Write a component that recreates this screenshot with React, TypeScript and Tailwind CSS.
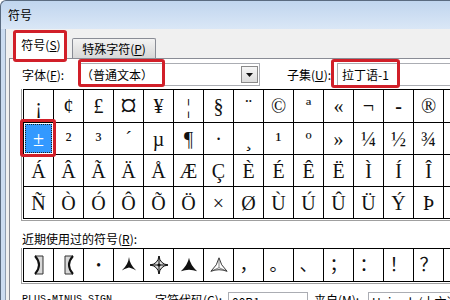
import React from "react";

const rows = [
  "¡¢£¤¥¦§¨©ª«¬\u00AD®",
  "±²³´µ¶·¸¹º»¼½¾",
  "ÁÂÃÄÅÆÇÈÉÊËÌÍÎ",
  "ÑÒÓÔÕÖ×ØÙÚÛÜÝÞ",
];

function Star3({ filled }: { filled?: boolean }) {
  return (
    <svg width="18" height="18" viewBox="0 0 20 20">
      {filled ? (
        <path d="M10 2 Q11.5 10 19 17 Q10 13.5 1 17 Q8.5 10 10 2 Z" fill="#111" />
      ) : (
        <path d="M10 1 Q10.8 9.5 18 16 Q11 12.8 10 12.8 Q9 12.8 2 16 Q9.2 9.5 10 1 Z" fill="#111" />
      )}
    </svg>
  );
}

function Star3Outline() {
  return (
    <svg width="18" height="18" viewBox="0 0 20 20">
      <path d="M10 2 Q11.5 10 19 17 Q10 13.5 1 17 Q8.5 10 10 2 Z" fill="#fff" stroke="#222" strokeWidth="1" />
      <path d="M10 3 V13 M10 13 L2 16.5 M10 13 L18 16.5" stroke="#555" strokeWidth="0.8" fill="none" />
    </svg>
  );
}

function Star4() {
  return (
    <svg width="20" height="20" viewBox="0 0 20 20">
      <path d="M10 1 Q11 9 19 10 Q11 11 10 19 Q9 11 1 10 Q9 9 10 1 Z" fill="#ddd" stroke="#111" strokeWidth="1" />
      <path d="M10 1 V19 M1 10 H19" stroke="#111" strokeWidth="1" />
      <circle cx="10" cy="10" r="1.6" fill="#111" />
    </svg>
  );
}

function BracketR() {
  return (
    <svg width="12" height="22" viewBox="0 0 12 22">
      <path d="M2 2 Q10 11 2 20 H10 V2 Z" fill="#d8d8d8" />
      <path d="M2 2 H10 V20 H2" stroke="#333" strokeWidth="1" fill="none" />
      <path d="M2 2 Q10 11 2 20" stroke="#111" strokeWidth="2" fill="none" />
    </svg>
  );
}

function BracketL() {
  return (
    <svg width="12" height="22" viewBox="0 0 12 22">
      <path d="M10 2 Q2 11 10 20 H2 V2 Z" fill="#d8d8d8" />
      <path d="M10 2 H2 V20 H10" stroke="#333" strokeWidth="1" fill="none" />
      <path d="M10 2 Q2 11 10 20" stroke="#111" strokeWidth="2" fill="none" />
    </svg>
  );
}

const recent: React.ReactNode[] = [
  <BracketR />,
  <BracketL />,
  <span className="text-[12px] font-bold">•</span>,
  <Star3 />,
  <Star4 />,
  <Star3 filled />,
  <Star3Outline />,
  "，",
  "。",
  "、",
  "；",
  "：",
  "！",
  "？",
];

function RedBox({ cls }: { cls: string }) {
  return <div className={`absolute z-20 rounded-[3px] border-[3px] border-[#d11f29] ${cls}`} />;
}

function renderGlyph(ch: string) {
  if (ch === "\u00AD") return <span className="font-bold">-</span>;
  if (ch === "¤") return <span className="text-[34px]">¤</span>;
  return ch;
}

export default function App() {
  return (
    <div className="relative h-[300px] w-[450px] overflow-hidden bg-white text-[12px] text-black font-['Noto_Sans_CJK_SC','Liberation_Sans',sans-serif]">
      {/* Title bar */}
      <div className="h-[29px] rounded-tl-[6px] border-l border-t border-[#5a6b80] bg-gradient-to-b from-[#c0d5ee] to-[#dae7f6] pl-[7px] pt-[7px] leading-[14px]">
        符号
      </div>
      <div className="flex h-[271px]">
        <div className="w-[6px] shrink-0 border-l border-r border-l-[#5a6b80] border-r-[#8e9db0] bg-[#cbdcf1]" />
        <div className="flex min-w-0 flex-1 flex-col bg-[#f0f0f0]">
          {/* Tabs */}
          <div className="flex h-[29px] shrink-0 items-start pt-[2px]">
            <div className="relative z-10 ml-[9px] flex h-[28px] w-[52px] items-center justify-center rounded-t-[2px] border border-b-0 border-[#898c95] bg-white pb-[2px]">
              符号(<u>S</u>)
            </div>
            <div className="ml-[5px] mt-[7px] flex h-[20px] w-[84px] items-center justify-center rounded-t-[2px] border border-b-0 border-[#898c95] bg-gradient-to-b from-[#f3f3f3] to-[#d7d7d7]">
              特殊字符(<u>P</u>)
            </div>
          </div>
          {/* Panel */}
          <div className="ml-[3px] flex flex-1 flex-col border-l border-t border-[#898c95] bg-white pl-[12px] pt-[4px]">
            <div className="flex h-[23px] shrink-0 items-center">
              <div className="w-[57px] shrink-0">
                字体(<u>F</u>):
              </div>
              <div className="flex h-[23px] w-[181px] shrink-0 items-center border border-[#abadb3] bg-white pl-px">
                <span>（普通文本）</span>
                <div className="ml-auto mr-px flex h-[17px] w-[17px] items-center justify-center border border-[#8a8a8a] bg-gradient-to-b from-[#f6f6f6] to-[#dcdcdc]">
                  <svg width="7" height="4" viewBox="0 0 7 4">
                    <path d="M0 0 H7 L3.5 4 Z" fill="#111" />
                  </svg>
                </div>
              </div>
              <div className="ml-[27px] w-[50px] shrink-0">
                子集(<u>U</u>):
              </div>
              <div className="flex h-[23px] w-[130px] shrink-0 items-center border border-[#abadb3] bg-white pl-[4px]">
                拉丁语-1
              </div>
            </div>

            {/* Character grid */}
            <div className="-ml-px mt-[3px] shrink-0 self-start border-b border-l border-[#a0a0a0] pb-px pl-px">
              <div className="grid w-max grid-cols-[repeat(15,29px)] grid-rows-[32px_31px_31px_31px] gap-px bg-black p-px font-['Liberation_Serif',serif] text-[20px] leading-none text-[#111]">
                {rows.map((r, ri) => [
                  ...Array.from(r).map((ch, ci) => {
                    if (ri === 1 && ci === 0) {
                      return (
                        <div key={`${ri}-${ci}`} className="flex bg-white p-px">
                          <div className="flex flex-1 items-center justify-center border border-dotted border-[#222] bg-[#3399ff] text-white">
                            ±
                          </div>
                        </div>
                      );
                    }
                    return (
                      <div key={`${ri}-${ci}`} className="flex items-center justify-center bg-white">
                        {renderGlyph(ch)}
                      </div>
                    );
                  }),
                  <div key={`${ri}-e`} className="bg-white" />,
                ])}
              </div>
            </div>

            <div className="mt-[11px] shrink-0 leading-[14px]">
              近期使用过的符号(<u>R</u>):
            </div>

            <div className="-ml-px mt-[2px] shrink-0 self-start border-b border-l border-[#a0a0a0] pb-px pl-px">
              <div className="grid w-max grid-cols-[repeat(15,29px)] grid-rows-[32px] gap-px bg-black p-px font-['Liberation_Serif','Noto_Sans_CJK_SC',serif] text-[18px] leading-none text-[#111]">
                {recent.map((g, i) => (
                  <div key={i} className="flex items-center justify-center bg-white">
                    {g}
                  </div>
                ))}
                <div className="bg-white" />
              </div>
            </div>

            <div className="mt-[8px] flex h-[23px] shrink-0 items-start">
              <div className="w-[133px] shrink-0 pt-[2px] font-['Liberation_Mono',monospace] text-[10px] leading-[12px]">
                PLUS-MINUS SIGN
              </div>
              <div className="w-[73px] shrink-0 pt-[1px] leading-[14px]">
                字符代码(<u>C</u>):
              </div>
              <div className="h-[22px] w-[80px] shrink-0 border border-[#abadb3] bg-white pl-[3px] pt-[2px] leading-[14px]">
                00B1
              </div>
              <div className="ml-[6px] w-[54px] shrink-0 pt-[1px] leading-[14px]">
                来自(<u>M</u>):
              </div>
              <div className="h-[22px] w-[120px] shrink-0 border border-[#abadb3] bg-white pl-[3px] pt-[2px] leading-[14px]">
                Unicode(十六进制)
              </div>
            </div>
          </div>
        </div>
      </div>

      {/* Red annotation boxes */}
      <RedBox cls="left-[13px] top-[30px] h-[32px] w-[54px]" />
      <RedBox cls="left-[78px] top-[59px] h-[28px] w-[87px]" />
      <RedBox cls="left-[331px] top-[59px] h-[29px] w-[69px]" />
      <RedBox cls="left-[20px] top-[119px] h-[38px] w-[36px]" />
    </div>
  );
}
